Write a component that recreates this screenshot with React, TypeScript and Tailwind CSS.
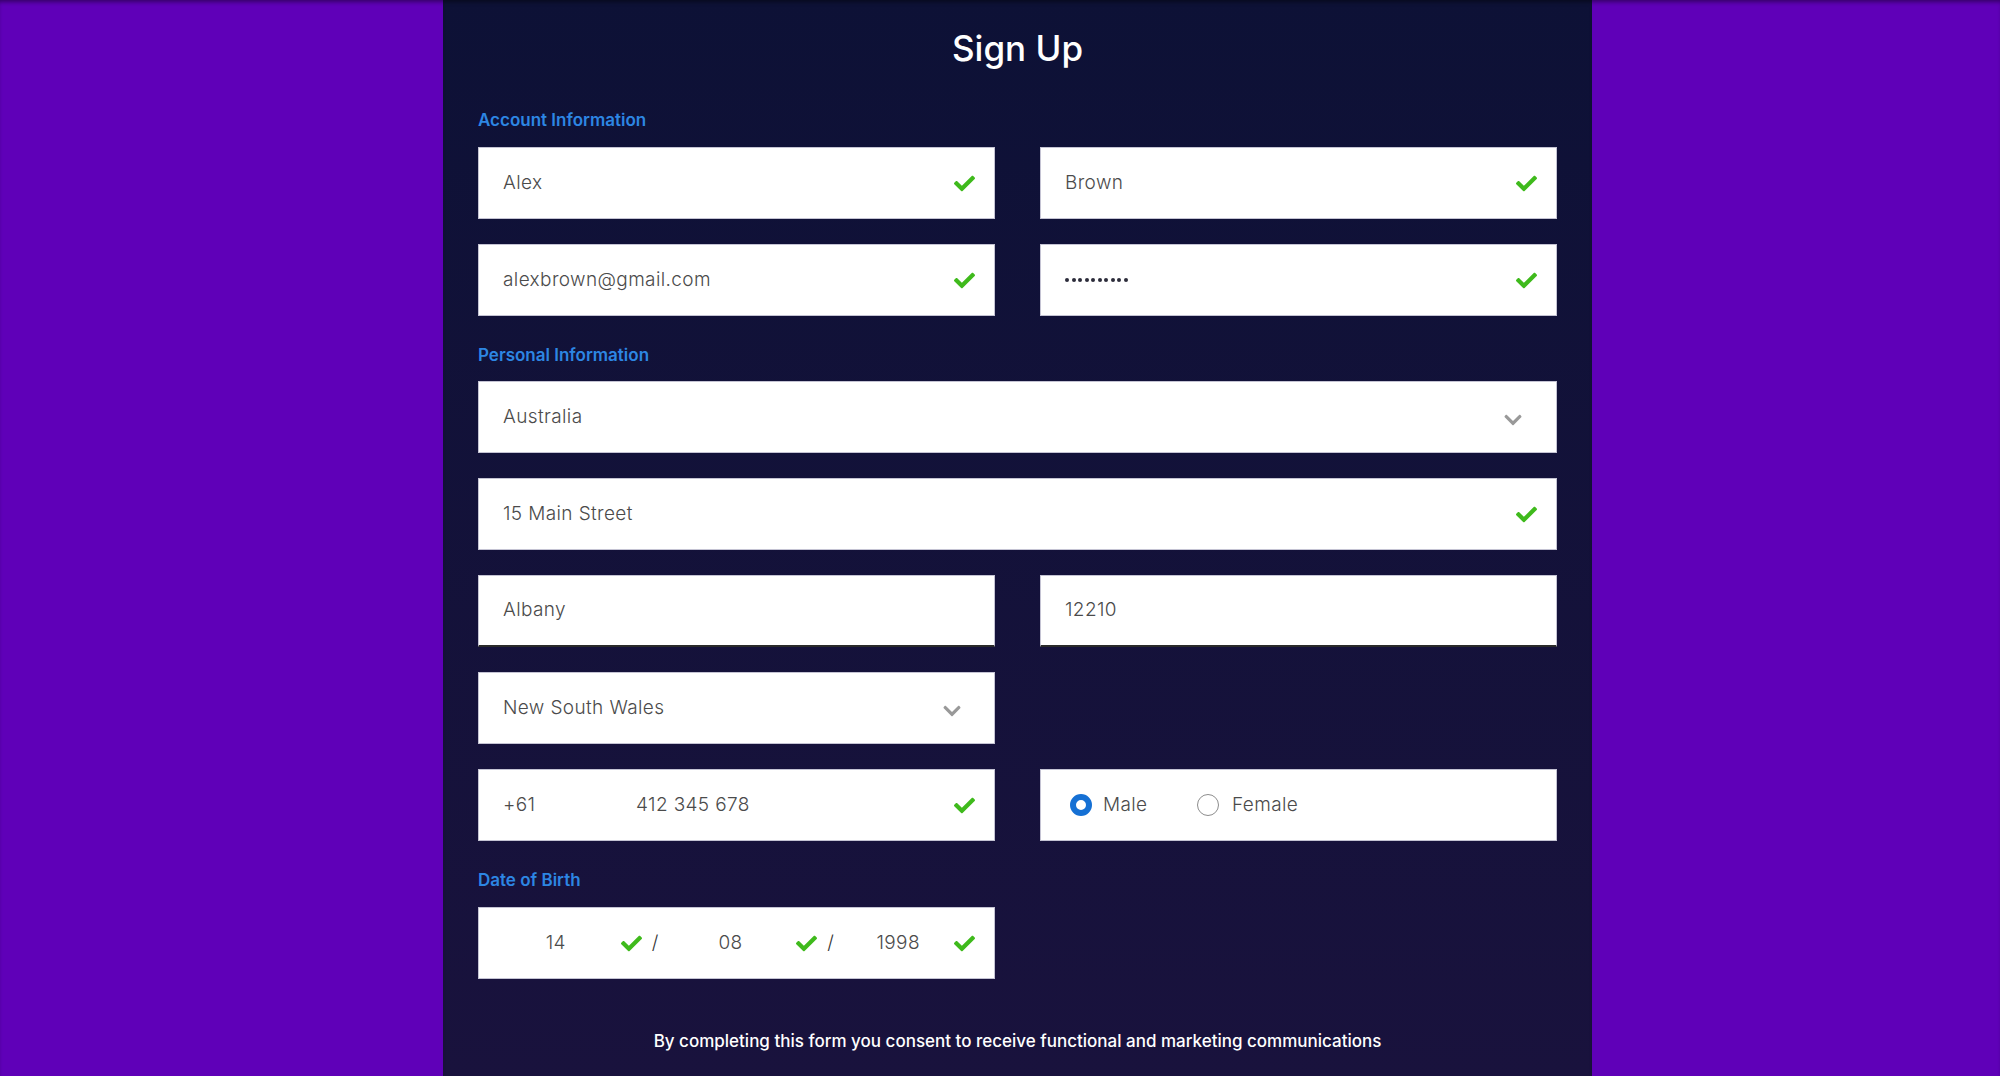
import { FaCheck, FaChevronDown } from "react-icons/fa";

const Check = () => <FaCheck className="shrink-0 text-[#3fba1c]" size={21} />;
const Chevron = () => <FaChevronDown className="shrink-0 text-[#999999] mt-[5px]" size={20} />;

function Field({
  children,
  className = "",
}: {
  children: React.ReactNode;
  className?: string;
}) {
  return (
    <div
      className={
        "flex h-[72px] items-center border border-[#c4c3d3] bg-white pl-[24px] pr-[19px] text-[19px] font-light tracking-[0.02em] text-[#4b4b4b] " +
        className
      }
    >
      {children}
    </div>
  );
}

function Label({ text, className = "" }: { text: string; className?: string }) {
  return (
    <p className={"text-[17px] leading-[24px] font-semibold text-[#2d86e3] " + className}>{text}</p>
  );
}

export default function App() {
  return (
    <div className="min-h-screen w-full bg-[#5f00b8] font-[Inter,'Liberation_Sans',sans-serif] shadow-[inset_0_4px_4px_-2px_rgba(0,0,0,0.45)]">
      <div className="ml-[443px] flex min-h-[1076px] w-[1149px] flex-col bg-gradient-to-b from-[#0d1136] to-[#19123d] px-[35px] shadow-[inset_0_4px_4px_-2px_rgba(0,0,0,0.45)]">
        <h1 className="mt-[28px] text-center text-[35px] leading-[40px] font-medium text-white">Sign Up</h1>

        <Label text="Account Information" className="mt-[40px]" />
        <div className="mt-[15px] grid grid-cols-2 gap-x-[45px] gap-y-[25px]">
          <Field>
            <span className="flex-1">Alex</span>
            <Check />
          </Field>
          <Field>
            <span className="flex-1">Brown</span>
            <Check />
          </Field>
          <Field>
            <span className="flex-1">alexbrown@gmail.com</span>
            <Check />
          </Field>
          <Field>
            <span className="flex flex-1 items-center gap-[2.5px]">
              {Array.from({ length: 10 }).map((_, i) => (
                <span key={i} className="h-[4px] w-[4px] rounded-full bg-[#2c2c3a]" />
              ))}
            </span>
            <Check />
          </Field>
        </div>

        <Label text="Personal Information" className="mt-[27px]" />
        <div className="mt-[14px] flex flex-col gap-[25px]">
          <Field className="pr-[33px]">
            <span className="flex-1">Australia</span>
            <Chevron />
          </Field>
          <Field>
            <span className="flex-1">15 Main Street</span>
            <Check />
          </Field>
          <div className="grid grid-cols-2 gap-x-[45px] gap-y-[25px]">
            <Field className="border-b-2 border-b-[#2a2a2a]">
              <span className="flex-1">Albany</span>
            </Field>
            <Field className="border-b-2 border-b-[#2a2a2a]">
              <span className="flex-1">12210</span>
            </Field>
            <Field className="pr-[32px]">
              <span className="flex-1">New South Wales</span>
              <Chevron />
            </Field>
            <div />
            <Field>
              <span className="w-[133px]">+61</span>
              <span className="flex-1">412 345 678</span>
              <Check />
            </Field>
            <Field className="pl-[29px]">
              <div className="flex w-[127px] items-center gap-[11px]">
                <span className="h-[22px] w-[22px] rounded-full border-[6px] border-[#1570d4] bg-white" />
                <span>Male</span>
              </div>
              <div className="flex items-center gap-[13px]">
                <span className="h-[22px] w-[22px] rounded-full border border-[#8d8d8d] bg-white" />
                <span>Female</span>
              </div>
            </Field>
          </div>
        </div>

        <Label text="Date of Birth" className="mt-[27px]" />
        <div className="mt-[15px] grid grid-cols-2 gap-x-[45px]">
          <Field className="pl-[22px]">
            <span className="w-[106px] text-center">14</span>
            <span className="ml-[12px]">
              <Check />
            </span>
            <span className="ml-[10px] text-[#333]">/</span>
            <span className="ml-[14px] w-[116px] text-center">08</span>
            <span className="ml-[8px]">
              <Check />
            </span>
            <span className="ml-[10px] text-[#333]">/</span>
            <span className="ml-[14px] w-[100px] text-center">1998</span>
            <span className="ml-[6px]">
              <Check />
            </span>
          </Field>
          <div />
        </div>

        <p className="mt-[50px] text-center text-[17px] leading-[24px] font-medium text-white">
          By completing this form you consent to receive functional and marketing communications
        </p>
      </div>
    </div>
  );
}
